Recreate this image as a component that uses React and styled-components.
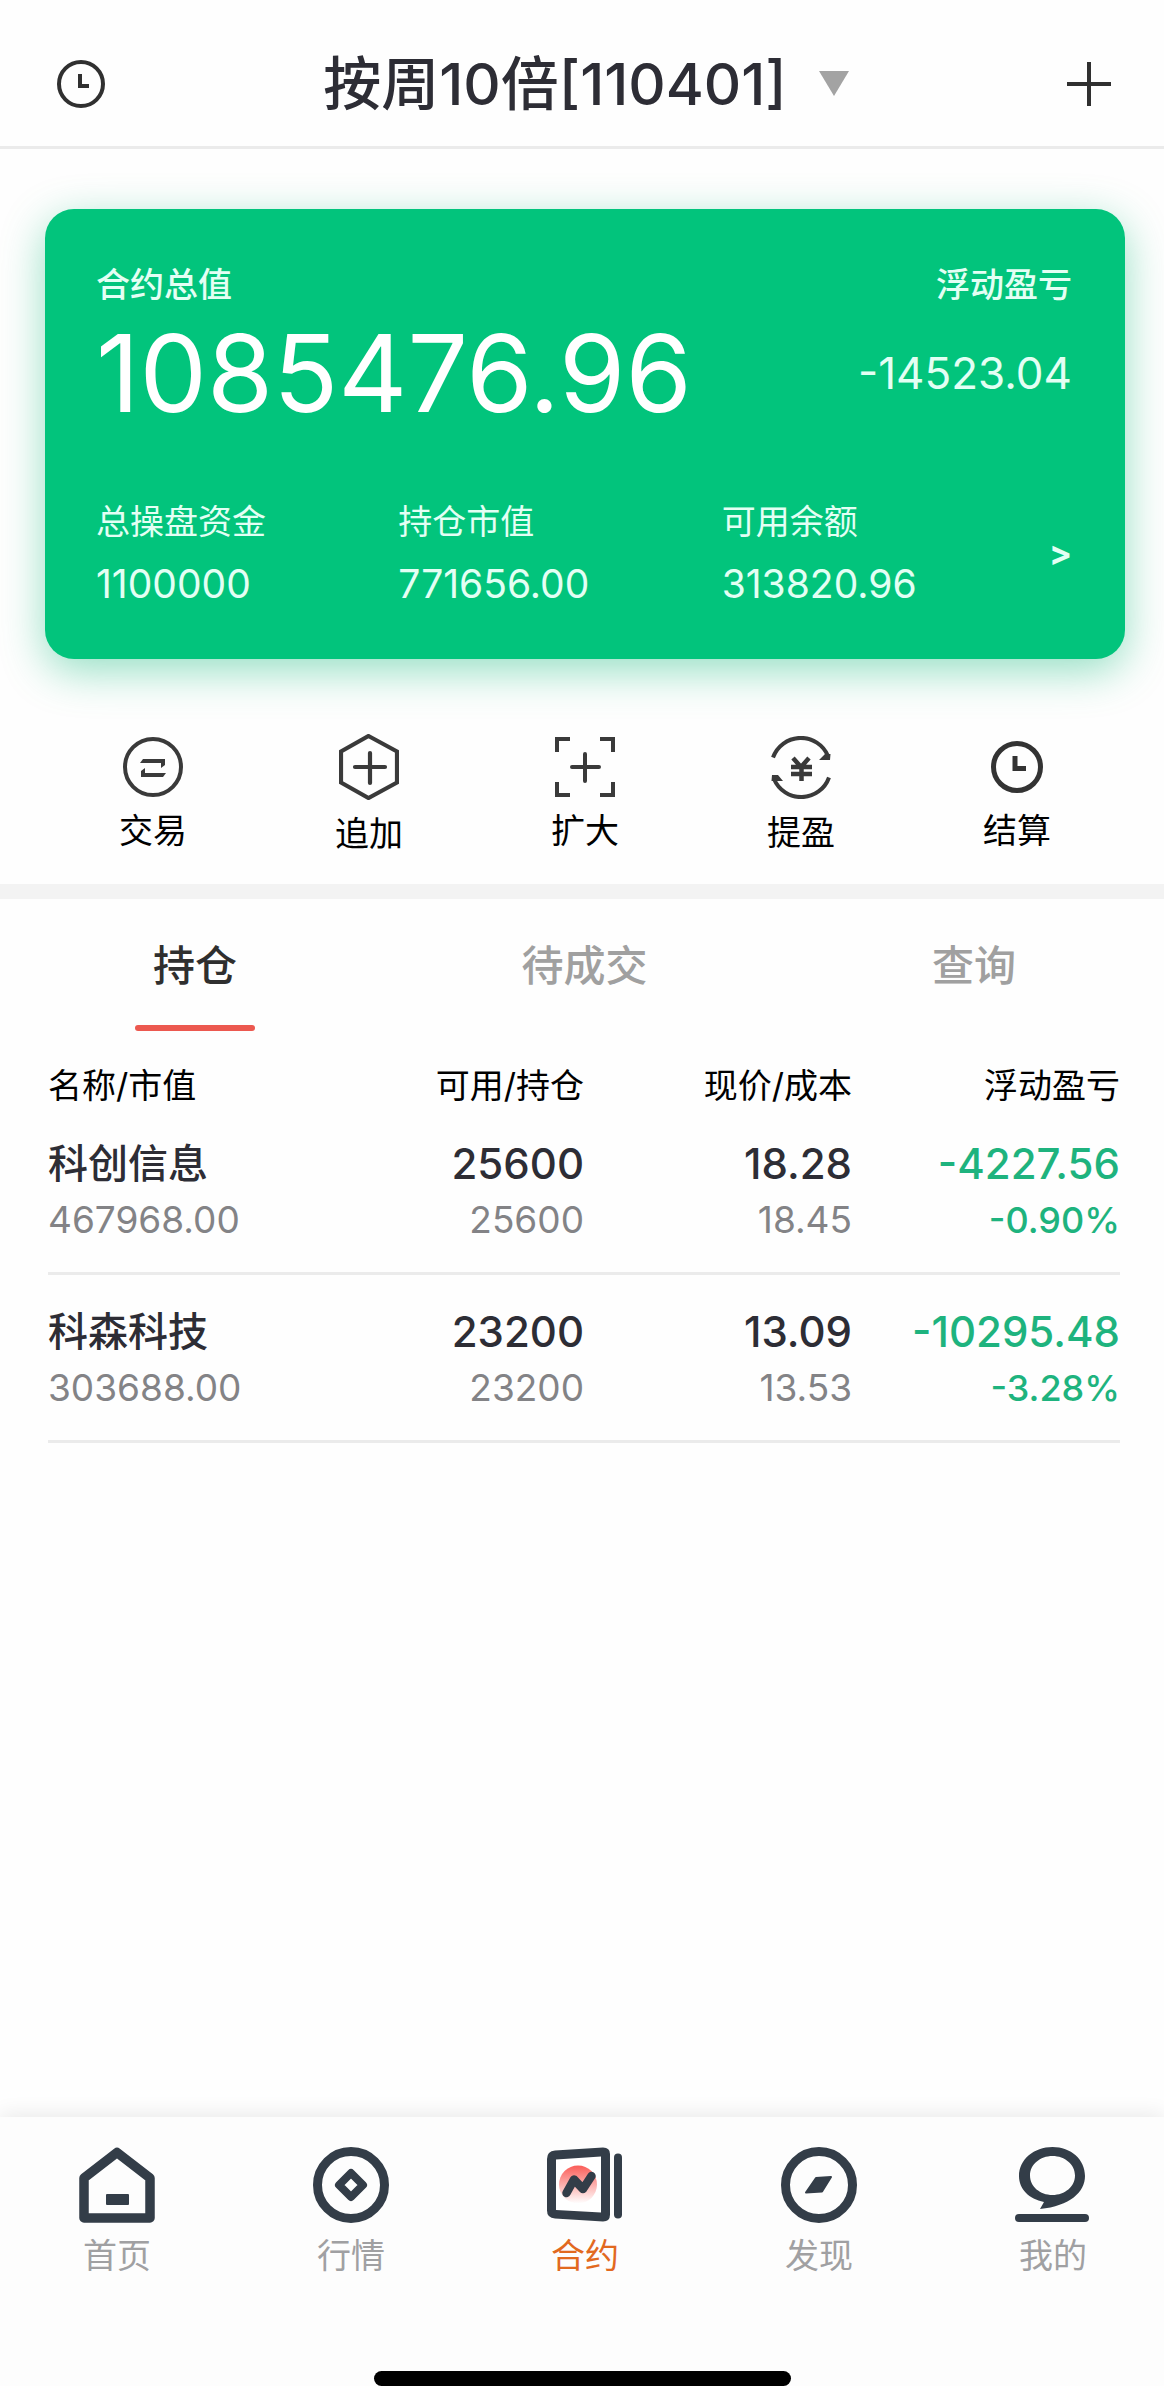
import React from "react";
import styled, { createGlobalStyle } from "styled-components";

const GlobalStyle = createGlobalStyle`
  * { box-sizing: border-box; }
  body {
    margin: 0;
    background: #fefefe;
    color: #2d2d35;
    font-family: Inter, "Noto Sans CJK SC", sans-serif;
  }
  button {
    padding: 0;
    border: 0;
    background: none;
    color: inherit;
    font: inherit;
    cursor: pointer;
  }
  svg { display: block; }
`;

const Page = styled.div`
  display: flex;
  flex-direction: column;
  min-height: 100vh;
`;

const Header = styled.header`
  display: flex;
  align-items: center;
  justify-content: space-between;
  height: 149px;
  padding: 22px 53px 0 57px;
  border-bottom: 3px solid #ebebeb;
`;

const IconButton = styled.button`
  display: flex;
`;

const AccountButton = styled.button`
  display: flex;
  align-items: center;
  gap: 32px;
`;

const Title = styled.h1`
  margin: 0;
  font-size: 58px;
  font-weight: 500;
  line-height: 64px;
`;

const Card = styled.section`
  margin: 60px 39px 0 45px;
  padding: 51px 53px 50px 51px;
  border-radius: 29px;
  background: #02c47c;
  color: #e3fff4;
  box-shadow: 0 12px 44px rgba(2, 180, 115, 0.42);
`;

const CardRow = styled.div`
  display: flex;
  align-items: center;
  justify-content: space-between;
`;

const CardLabel = styled.span`
  font-size: 34px;
  font-weight: 500;
  line-height: 50px;
`;

const Total = styled.strong`
  margin-top: 8px;
  color: #fff;
  font-size: 107px;
  font-weight: 400;
  line-height: 110px;
`;

const Floating = styled.span`
  margin-top: 8px;
  font-size: 44px;
  line-height: 50px;
`;

const Stats = styled(CardRow)`
  margin-top: 69px;
`;

const Stat = styled.div`
  display: flex;
  flex-direction: column;
  gap: 12px;
  font-size: 34px;
  line-height: 50px;
`;

const StatValue = styled.span`
  font-size: 39px;
`;

const More = styled.button`
  font-size: 34px;
  font-weight: 700;
  line-height: 50px;
`;

const Actions = styled.nav`
  display: grid;
  grid-template-columns: repeat(5, 1fr);
  align-items: center;
  margin: 0 39px 0 45px;
  padding: 75px 0 30px;
`;

const Action = styled.button`
  display: flex;
  flex-direction: column;
  align-items: center;
  gap: 14px;
  color: #000;
  font-size: 34px;
  line-height: 40px;
`;

const Band = styled.div`
  height: 15px;
  background: #f3f3f3;
`;

const Tabs = styled.div`
  display: flex;
  justify-content: space-between;
  padding: 42px 130px 0 135px;
`;

const Tab = styled.button`
  display: flex;
  flex-direction: column;
  align-items: center;
  gap: 34px;
  min-width: 120px;
  color: ${(p) => (p.$active ? "#2f2f2f" : "#a0a0a0")};
  font-size: 42px;
  font-weight: 500;
  line-height: 50px;
  white-space: nowrap;

  &::after {
    content: "";
    width: 120px;
    height: 6px;
    border-radius: 3px;
    background: ${(p) => (p.$active ? "#ec584f" : "transparent")};
  }
`;

const Holdings = styled.section`
  flex: 1;
  padding: 34px 44px 0 48px;
`;

const Table = styled.table`
  width: 100%;
  border-spacing: 0;
  table-layout: fixed;
`;

const HeadCell = styled.th`
  padding: 0;
  color: #000;
  font-size: 34px;
  font-weight: 400;
  line-height: 42px;
  text-align: right;

  &:first-child { text-align: left; }
`;

const Cell = styled.td`
  padding: 29px 0 24px;
  border-bottom: 3px solid #ebebeb;
  color: ${(p) => (p.$gain ? "#1eb37e" : "#2d2d35")};
  text-align: right;
  white-space: nowrap;

  &:first-child { text-align: left; }
`;

const Primary = styled.div`
  font-size: ${(p) => (p.$name ? 40 : 42)}px;
  font-weight: 500;
  line-height: 56px;
`;

const Secondary = styled.div`
  color: ${(p) => (p.$gain ? "inherit" : "#838386")};
  font-size: ${(p) => (p.$gain ? 36 : 37)}px;
  font-weight: ${(p) => (p.$gain ? 500 : 400)};
  line-height: 56px;
`;

const BottomBar = styled.footer`
  display: flex;
  flex-direction: column;
  height: 269px;
  background: #fdfdfd;
  box-shadow: 0 -2px 20px rgba(0, 0, 0, 0.09);
`;

const BottomNav = styled.nav`
  display: flex;
  flex: 1;
  justify-content: space-between;
  align-items: flex-start;
  padding: 30px 71px 0 77px;
`;

const NavItem = styled.a`
  display: flex;
  flex-direction: column;
  align-items: center;
  gap: 13px;
  width: 80px;
  color: ${(p) => (p.$active ? "#e2691f" : "#a0a0a2")};
  font-size: 34px;
  line-height: 40px;
  text-decoration: none;
`;

const HomeIndicator = styled.div`
  align-self: center;
  width: 417px;
  height: 15px;
  border-radius: 8px;
  background: #000;
`;

const INK = "#3a3a3a";
const NAVY = "#333d48";

const HeaderClock = () => (
  <svg width="48" height="48" viewBox="0 0 48 48" fill="none" stroke="#303030">
    <circle cx="24" cy="24" r="22" strokeWidth="4" />
    <path d="M23 14V26H32" strokeWidth="4" />
  </svg>
);

const PlusIcon = () => (
  <svg width="44" height="44" viewBox="0 0 44 44" fill="none" stroke="#303030" strokeWidth="4">
    <path d="M22 0V44M0 22H44" />
  </svg>
);

const Caret = () => (
  <svg width="30" height="26" viewBox="0 0 30 26">
    <path d="M0 0H30L15 25Z" fill="#a3a3a3" />
  </svg>
);

const TradeIcon = () => (
  <svg width="60" height="60" viewBox="0 0 60 60">
    <circle cx="30" cy="30" r="28" fill="none" stroke={INK} strokeWidth="4" />
    <path d="M20 22H42V28L38 31V26H17Z M40 40H18V34L22 31V36H43Z" fill={INK} />
  </svg>
);

const AddIcon = () => (
  <svg width="60" height="66" viewBox="0 0 60 66" fill="none" stroke={INK} strokeWidth="4.200">
    <path d="M29.500 2L58 17.500V48.500L29.500 64L2 48.500V17.500Z" />
    <path d="M31 19V49M16 33H46" strokeLinecap="round" />
  </svg>
);

const ExpandIcon = () => (
  <svg width="60" height="60" viewBox="0 0 60 60" fill="none" stroke={INK} strokeWidth="4">
    <path d="M15 2H2V15M45 2H58V15M2 45V58H15M58 45V58H45" />
    <path d="M30 17V44M17 30H44" strokeLinecap="round" />
  </svg>
);

const WithdrawIcon = () => (
  <svg width="60" height="63" viewBox="0 0 60 63" fill="none" stroke={INK}>
    <path d="M2 21.500A29.500 29.500 0 0 1 57 20M58 41.500A29.500 29.500 0 0 1 3 43" strokeWidth="4" />
    <path d="M59.500 18L59 24H48L54 18ZM.5 45L1 39H7L12 45Z" fill={INK} stroke="none" />
    <path d="M22 22L30 31L38 22M20 31H41M20 38H41M30.500 31V45" strokeWidth="4.500" />
  </svg>
);

const SettleIcon = () => (
  <svg width="54" height="60" viewBox="0 0 54 60" fill="none" stroke="#333" strokeWidth="5">
    <circle cx="27" cy="30" r="23.500" />
    <path d="M25 19V31.500H36" />
  </svg>
);

const HomeIcon = () => (
  <svg width="76" height="76" viewBox="0 0 76 76">
    <path d="M5 31L38 5.500L71 31V71H5Z" fill="none" stroke={NAVY} strokeWidth="9.500" strokeLinejoin="round" />
    <rect x="27" y="47" width="23" height="11" rx="1" fill={NAVY} />
  </svg>
);

const MarketIcon = () => (
  <svg width="76" height="76" viewBox="0 0 76 76" fill="none" stroke={NAVY}>
    <circle cx="38" cy="38" r="33.500" strokeWidth="9" />
    <path d="M38 26L50 38L38 50L26 38Z" strokeWidth="8" strokeLinejoin="round" />
  </svg>
);

const ContractIcon = () => (
  <svg width="76" height="76" viewBox="0 0 76 76" fill="none">
    <defs>
      <linearGradient id="sun" x1="0" y1="0" x2="0" y2="1">
        <stop offset="0" stopColor="#fa5d58" />
        <stop offset="1" stopColor="#fa5d58" stopOpacity="0" />
      </linearGradient>
    </defs>
    <path d="M8 3.500L56 .5Q63 .5 63 7V67.500Q63 74.500 56 74.500L8 71.500Q0 71 0 63.500V12Q0 4 8 3.500Z" fill={NAVY} />
    <path d="M9 12.500L54 9.500V65.500L9 63Z" fill="#fff" />
    <circle cx="31" cy="37.500" r="19" fill="url(#sun)" />
    <path d="M19.500 46L27 32.500L36 42L44.500 29" stroke={NAVY} strokeWidth="8.500" strokeLinecap="round" strokeLinejoin="round" />
    <path d="M71 10.500V67.500" stroke={NAVY} strokeWidth="8" strokeLinecap="round" />
  </svg>
);

const DiscoverIcon = () => (
  <svg width="76" height="76" viewBox="0 0 76 76">
    <circle cx="38" cy="38" r="33.500" fill="none" stroke={NAVY} strokeWidth="9" />
    <path d="M35 31L50 30L41 44.500L25 45.500Z" fill={NAVY} stroke={NAVY} strokeWidth="2" strokeLinejoin="round" />
  </svg>
);

const ProfileIcon = () => (
  <svg width="76" height="76" viewBox="0 0 76 76">
    <path
      fill={NAVY}
      fillRule="evenodd"
      d="M37.500 0C56 0 70 12.500 70 29C70 45 55 59 25 62L29 55C14 52 4 42 4 29C4 12.500 19 0 37.500 0ZM37.500 9C25 9 15 17.500 15 28.500S25 48 37.500 48S60 39.500 60 28.500S50 9 37.500 9Z"
    />
    <rect x="0" y="67" width="74" height="8" rx="4" fill={NAVY} />
  </svg>
);

const stats = [
  { label: "总操盘资金", value: "1100000" },
  { label: "持仓市值", value: "771656.00" },
  { label: "可用余额", value: "313820.96" },
];

const actions = [
  { label: "交易", Icon: TradeIcon },
  { label: "追加", Icon: AddIcon },
  { label: "扩大", Icon: ExpandIcon },
  { label: "提盈", Icon: WithdrawIcon },
  { label: "结算", Icon: SettleIcon },
];

const tabs = ["持仓", "待成交", "查询"];

const columns = ["名称/市值", "可用/持仓", "现价/成本", "浮动盈亏"];

const holdings = [
  { name: "科创信息", worth: "467968.00", usable: "25600", held: "25600", price: "18.28", cost: "18.45", gain: "-4227.56", rate: "-0.90%" },
  { name: "科森科技", worth: "303688.00", usable: "23200", held: "23200", price: "13.09", cost: "13.53", gain: "-10295.48", rate: "-3.28%" },
];

const navItems = [
  { label: "首页", Icon: HomeIcon },
  { label: "行情", Icon: MarketIcon },
  { label: "合约", Icon: ContractIcon },
  { label: "发现", Icon: DiscoverIcon },
  { label: "我的", Icon: ProfileIcon },
];

export default function App() {
  const [tab, setTab] = React.useState(tabs[0]);

  return (
    <Page>
      <GlobalStyle />
      <Header>
        <IconButton aria-label="历史"><HeaderClock /></IconButton>
        <AccountButton>
          <Title>按周10倍[110401]</Title>
          <Caret />
        </AccountButton>
        <IconButton aria-label="新增"><PlusIcon /></IconButton>
      </Header>

      <Card>
        <CardRow>
          <CardLabel>合约总值</CardLabel>
          <CardLabel>浮动盈亏</CardLabel>
        </CardRow>
        <CardRow>
          <Total>1085476.96</Total>
          <Floating>-14523.04</Floating>
        </CardRow>
        <Stats>
          {stats.map((s) => (
            <Stat key={s.label}>
              <span>{s.label}</span>
              <StatValue>{s.value}</StatValue>
            </Stat>
          ))}
          <More aria-label="详情">&gt;</More>
        </Stats>
      </Card>

      <Actions>
        {actions.map(({ label, Icon }) => (
          <Action key={label}>
            <Icon />
            {label}
          </Action>
        ))}
      </Actions>

      <Band />

      <Tabs role="tablist">
        {tabs.map((t) => (
          <Tab key={t} role="tab" aria-selected={t === tab} $active={t === tab} onClick={() => setTab(t)}>
            {t}
          </Tab>
        ))}
      </Tabs>

      <Holdings>
        <Table>
          <thead>
            <tr>
              {columns.map((c) => (
                <HeadCell key={c} scope="col">{c}</HeadCell>
              ))}
            </tr>
          </thead>
          <tbody>
            {holdings.map((h) => (
              <tr key={h.name}>
                <Cell>
                  <Primary $name>{h.name}</Primary>
                  <Secondary>{h.worth}</Secondary>
                </Cell>
                <Cell>
                  <Primary>{h.usable}</Primary>
                  <Secondary>{h.held}</Secondary>
                </Cell>
                <Cell>
                  <Primary>{h.price}</Primary>
                  <Secondary>{h.cost}</Secondary>
                </Cell>
                <Cell $gain>
                  <Primary>{h.gain}</Primary>
                  <Secondary $gain>{h.rate}</Secondary>
                </Cell>
              </tr>
            ))}
          </tbody>
        </Table>
      </Holdings>

      <BottomBar>
        <BottomNav>
          {navItems.map(({ label, Icon }) => (
            <NavItem key={label} href="#" $active={label === "合约"}>
              <Icon />
              {label}
            </NavItem>
          ))}
        </BottomNav>
        <HomeIndicator />
      </BottomBar>
    </Page>
  );
}
